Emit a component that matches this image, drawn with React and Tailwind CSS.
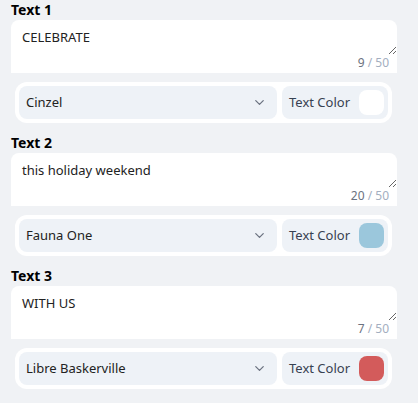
import { ChevronDown } from 'lucide-react'

const ITEMS = [
  { label: 'Text 1', value: 'CELEBRATE', font: 'Cinzel', color: '#ffffff' },
  { label: 'Text 2', value: 'this holiday weekend', font: 'Fauna One', color: '#9bc7dc' },
  { label: 'Text 3', value: 'WITH US', font: 'Libre Baskerville', color: '#d35b5b' },
]

function TextBlock({ item }) {
  return (
    <div className="flex flex-col">
      <div className="text-[14px] leading-5 font-bold text-black">{item.label}</div>
      <div className="bg-white rounded-t-lg w-[386px]">
        <textarea
          defaultValue={item.value}
          rows={1}
          className="block w-full h-[35px] resize-y bg-transparent px-[11px] pt-[7px] text-[13px] leading-5 text-[#222] outline-none"
        />
        <div className="h-[18px] pr-2 text-right text-[12px] leading-[16px]">
          <span className="text-[#6b7280]">{item.value.length}</span>
          <span className="text-[#a3aec0]"> / 50</span>
        </div>
      </div>
      <div className="mt-[9px] ml-1 w-[377px] bg-white rounded-xl p-1 flex gap-[5px]">
        <div className="w-[258px] h-[33px] bg-[#eef2f7] rounded-lg flex items-center justify-between pl-[7px] pr-[10px]">
          <span className="text-[13px] text-[#222]">{item.font}</span>
          <ChevronDown size={15} strokeWidth={2} className="text-[#6b7280]" />
        </div>
        <div className="flex-1 h-[33px] bg-[#eef2f7] rounded-lg flex items-center justify-between pl-[7px] pr-[4px]">
          <span className="text-[13px] text-[#374151]">Text Color</span>
          <div className="w-[25px] h-[25px] rounded-lg" style={{ background: item.color }} />
        </div>
      </div>
    </div>
  )
}

export default function App() {
  return (
    <div
      className="w-[418px] h-[403px] bg-[#f0f2f5] pl-[11px] flex flex-col gap-[10px] overflow-hidden"
      style={{ fontFamily: '"Noto Sans", sans-serif' }}
    >
      {ITEMS.map(item => <TextBlock key={item.label} item={item} />)}
    </div>
  )
}
